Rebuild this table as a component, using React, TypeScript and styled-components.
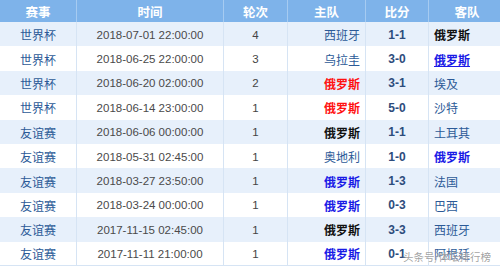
import styled, { createGlobalStyle } from 'styled-components';

const GlobalStyle = createGlobalStyle`
	html, body {
		margin: 0;
		padding: 0;
		background: #ffffff;
	}
	body {
		font-family: 'Liberation Sans', 'Noto Sans CJK SC', sans-serif;
	}
`;

const Wrapper = styled.div`
	position: relative;
	width: 500px;
	height: 267px;
	overflow: hidden;
`;

const Table = styled.table`
	width: 500px;
	border-collapse: collapse;
	table-layout: fixed;
	font-size: 12px;
`;

const HeadCell = styled.th<{ $w: number }>`
	width: ${(p) => p.$w}px;
	height: 22px;
	padding: 0;
	background: #7eb3ea;
	color: #ffffff;
	font-family: 'Noto Sans CJK SC', sans-serif;
	font-size: 12.5px;
	font-weight: bold;
	text-align: center;
	border-left: 1px solid #a6cbf1;
	&:first-child {
		border-left: none;
	}
`;

const Row = styled.tr<{ $odd: boolean }>`
	height: 24.4px;
	background: ${(p) => (p.$odd ? '#e7f0fb' : '#ffffff')};
	&:last-child td {
		border-bottom: 1px solid #d6e4f4;
	}
`;

const Cell = styled.td<{ $align?: 'left' | 'right' | 'center' }>`
	padding: 1px 5px 0;
	text-align: ${(p) => p.$align ?? 'center'};
	border-left: 1px solid #d6e4f4;
	white-space: nowrap;
	&:first-child {
		border-left: none;
	}
`;

const Event = styled.span`
	font-family: 'Noto Sans CJK SC', sans-serif;
	color: #2c5a97;
`;

const Time = styled.span`
	font-size: 11.5px;
	color: #4a4a4a;
`;

const Round = styled.span`
	font-size: 11.5px;
	color: #444444;
`;

const Score = styled.span`
	font-size: 12px;
	font-weight: bold;
	color: #2d4c7c;
`;

const teamColors = {
	plain: '#2c5a97',
	draw: '#111111',
	win: '#ff1111',
	loss: '#1a1ae6',
};

type Mark = keyof typeof teamColors;

const Team = styled.span<{ $mark: Mark; $under?: boolean }>`
	font-family: 'Noto Sans CJK SC', sans-serif;
	color: ${(p) => teamColors[p.$mark]};
	font-weight: ${(p) => (p.$mark === 'plain' ? 'normal' : 'bold')};
	text-decoration: ${(p) => (p.$under ? 'underline' : 'none')};
`;

const Watermark = styled.div`
	position: absolute;
	left: 403px;
	top: 250px;
	font-family: 'Noto Sans CJK SC', sans-serif;
	font-size: 10.5px;
	line-height: 14px;
	color: rgba(120, 120, 120, 0.7);
	text-shadow: 0 0 2px #ffffff;
	white-space: nowrap;
`;

type Match = {
	event: string;
	time: string;
	round: number;
	home: string;
	homeMark: Mark;
	score: string;
	away: string;
	awayMark: Mark;
	under?: boolean;
};

const matches: Match[] = [
	{ event: '世界杯', time: '2018-07-01 22:00:00', round: 4, home: '西班牙', homeMark: 'plain', score: '1-1', away: '俄罗斯', awayMark: 'draw' },
	{ event: '世界杯', time: '2018-06-25 22:00:00', round: 3, home: '乌拉圭', homeMark: 'plain', score: '3-0', away: '俄罗斯', awayMark: 'loss', under: true },
	{ event: '世界杯', time: '2018-06-20 02:00:00', round: 2, home: '俄罗斯', homeMark: 'win', score: '3-1', away: '埃及', awayMark: 'plain' },
	{ event: '世界杯', time: '2018-06-14 23:00:00', round: 1, home: '俄罗斯', homeMark: 'win', score: '5-0', away: '沙特', awayMark: 'plain' },
	{ event: '友谊赛', time: '2018-06-06 00:00:00', round: 1, home: '俄罗斯', homeMark: 'draw', score: '1-1', away: '土耳其', awayMark: 'plain' },
	{ event: '友谊赛', time: '2018-05-31 02:45:00', round: 1, home: '奥地利', homeMark: 'plain', score: '1-0', away: '俄罗斯', awayMark: 'loss' },
	{ event: '友谊赛', time: '2018-03-27 23:50:00', round: 1, home: '俄罗斯', homeMark: 'loss', score: '1-3', away: '法国', awayMark: 'plain' },
	{ event: '友谊赛', time: '2018-03-24 00:00:00', round: 1, home: '俄罗斯', homeMark: 'loss', score: '0-3', away: '巴西', awayMark: 'plain' },
	{ event: '友谊赛', time: '2017-11-15 02:45:00', round: 1, home: '俄罗斯', homeMark: 'draw', score: '3-3', away: '西班牙', awayMark: 'plain' },
	{ event: '友谊赛', time: '2017-11-11 21:00:00', round: 1, home: '俄罗斯', homeMark: 'loss', score: '0-1', away: '阿根廷', awayMark: 'plain' },
];

const columns = [
	{ label: '赛事', w: 76 },
	{ label: '时间', w: 146 },
	{ label: '轮次', w: 63 },
	{ label: '主队', w: 77 },
	{ label: '比分', w: 62 },
	{ label: '客队', w: 76 },
];

const App = () => {
	return (
		<Wrapper>
			<GlobalStyle />
			<Table>
				<thead>
					<tr>
						{columns.map((c) => (
							<HeadCell key={c.label} $w={c.w}>
								{c.label}
							</HeadCell>
						))}
					</tr>
				</thead>
				<tbody>
					{matches.map((m, i) => (
						<Row key={m.time} $odd={i % 2 === 0}>
							<Cell>
								<Event>{m.event}</Event>
							</Cell>
							<Cell>
								<Time>{m.time}</Time>
							</Cell>
							<Cell>
								<Round>{m.round}</Round>
							</Cell>
							<Cell $align="right">
								<Team $mark={m.homeMark}>{m.home}</Team>
							</Cell>
							<Cell>
								<Score>{m.score}</Score>
							</Cell>
							<Cell $align="left">
								<Team $mark={m.awayMark} $under={m.under}>
									{m.away}
								</Team>
							</Cell>
						</Row>
					))}
				</tbody>
			</Table>
			<Watermark>头条号/体坛排行榜</Watermark>
		</Wrapper>
	);
};

export default App;
